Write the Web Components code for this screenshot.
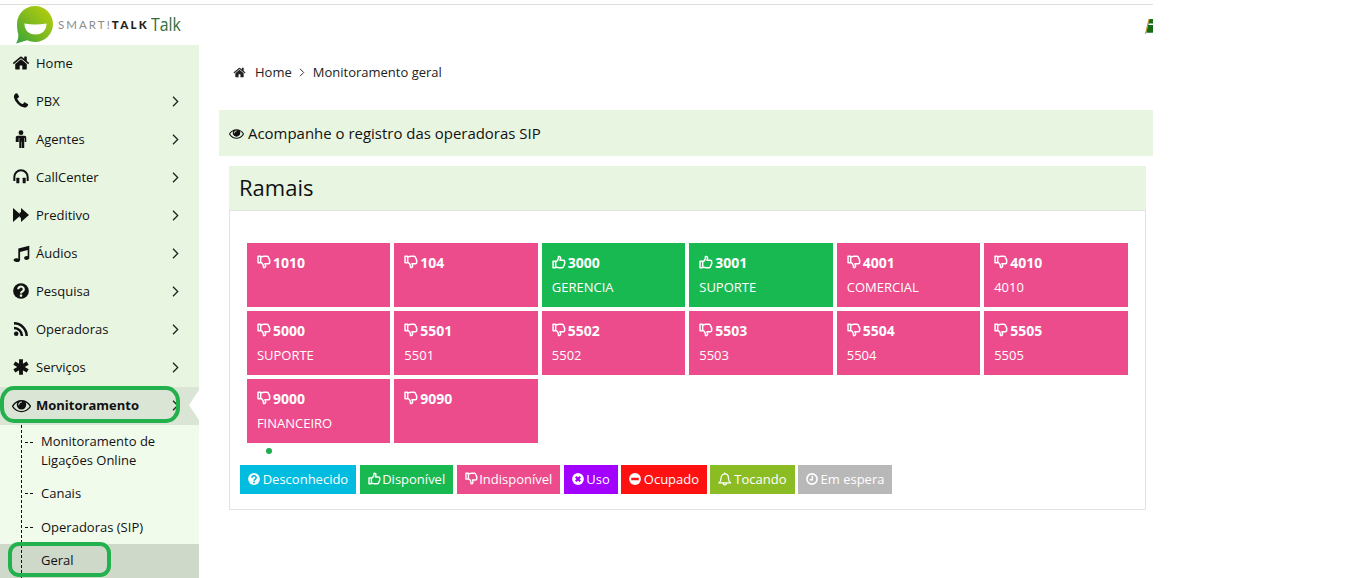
<!DOCTYPE html>
<html lang="pt">
<head>
<meta charset="utf-8">
<title>Monitoramento geral</title>
<style>
html,body{margin:0;padding:0;background:#fff;overflow:hidden;height:578px}
body{font:13px "Open Sans",sans-serif;color:#111}
</style>
</head>
<body>
<smart-app>
  <smart-header slot="header"></smart-header>
  <side-nav slot="nav">
    <nav-item icon="home">Home</nav-item>
    <nav-item icon="phone" more>PBX</nav-item>
    <nav-item icon="male" more>Agentes</nav-item>
    <nav-item icon="headphones" more>CallCenter</nav-item>
    <nav-item icon="forward" more>Preditivo</nav-item>
    <nav-item icon="music" more>Áudios</nav-item>
    <nav-item icon="question" more>Pesquisa</nav-item>
    <nav-item icon="rss" more>Operadoras</nav-item>
    <nav-item icon="asterisk" more>Serviços</nav-item>
    <nav-item icon="eye" more active>Monitoramento</nav-item>
    <sub-list>
      <sub-item tall>Monitoramento de<br>Ligações Online</sub-item>
      <sub-item>Canais</sub-item>
      <sub-item>Operadoras (SIP)</sub-item>
      <sub-item active>Geral</sub-item>
    </sub-list>
  </side-nav>
  <bread-crumb slot="main"></bread-crumb>
  <page-banner slot="main">Acompanhe o registro das operadoras SIP</page-banner>
  <ramal-panel slot="main" heading="Ramais">
    <ramal-tile slot="tiles" state="off" num="1010"></ramal-tile>
    <ramal-tile slot="tiles" state="off" num="104"></ramal-tile>
    <ramal-tile slot="tiles" state="on" num="3000">GERENCIA</ramal-tile>
    <ramal-tile slot="tiles" state="on" num="3001">SUPORTE</ramal-tile>
    <ramal-tile slot="tiles" state="off" num="4001">COMERCIAL</ramal-tile>
    <ramal-tile slot="tiles" state="off" num="4010">4010</ramal-tile>
    <ramal-tile slot="tiles" state="off" num="5000">SUPORTE</ramal-tile>
    <ramal-tile slot="tiles" state="off" num="5501">5501</ramal-tile>
    <ramal-tile slot="tiles" state="off" num="5502">5502</ramal-tile>
    <ramal-tile slot="tiles" state="off" num="5503">5503</ramal-tile>
    <ramal-tile slot="tiles" state="off" num="5504">5504</ramal-tile>
    <ramal-tile slot="tiles" state="off" num="5505">5505</ramal-tile>
    <ramal-tile slot="tiles" state="off" num="9000">FINANCEIRO</ramal-tile>
    <ramal-tile slot="tiles" state="off" num="9090"></ramal-tile>
    <status-badge slot="legend" icon="question" color="#00bcdf">Desconhecido</status-badge>
    <status-badge slot="legend" icon="thumbup" color="#19b952">Disponível</status-badge>
    <status-badge slot="legend" icon="thumbdown" color="#ec4c8b">Indisponível</status-badge>
    <status-badge slot="legend" icon="times" color="#a200ff">Uso</status-badge>
    <status-badge slot="legend" icon="minus" color="#ff1111">Ocupado</status-badge>
    <status-badge slot="legend" icon="bell" color="#8cbc24">Tocando</status-badge>
    <status-badge slot="legend" icon="clock" color="#b8b8b8">Em espera</status-badge>
  </ramal-panel>
</smart-app>
<script>
const THUMB = 'M1.200 7.200h3v7.300h-3zM4.200 7.800c1.300-.6 2.200-1.700 2.800-3.100.3-.8.4-1.700.4-3 1.500-.4 2.500.5 2.400 2.100-.1.900-.4 1.600-.7 2.300h3.700c1.500 0 2 1.200 1.500 2.200.6.800.5 1.800-.3 2.300.2.900-.1 1.700-.9 2.100.1 1.100-.6 1.800-1.700 1.800H8.100c-1.500 0-2.700-.5-3.900-.9';
const PATHS = {
  home:'<svg viewBox="0 0 1792 1792"><path fill="currentColor" d="M1472 992v480q0 26-19 45t-45 19h-384v-384h-256v384h-384q-26 0-45-19t-19-45v-480q0-1 .5-3t.5-3l575-474 575 474q1 2 1 6zm223-69l-62 74q-8 9-21 11h-3q-13 0-21-7l-692-577-692 577q-12 8-24 7-13-2-21-11l-62-74q-8-10-7-23.500t11-21.500l719-599q32-26 76-26t76 26l244 204v-195q0-14 9-23t23-9h192q14 0 23 9t9 23v408l219 182q10 8 11 21.500t-7 23.500z"/></svg>',
  phone:'<svg viewBox="0 0 1792 1792"><path fill="currentColor" d="M1600 1240q0 27-10 70.500t-21 68.500q-21 50-122 106-94 51-186 51-27 0-53-3.500t-57.500-12.500-47-14.500-55.500-20.500-49-18q-98-35-175-83-127-79-264-216t-216-264q-48-77-83-175-3-9-18-49t-20.500-55.500-14.500-47-12.500-57.500-3.500-53q0-92 51-186 56-101 106-122 25-11 68.500-21t70.500-10q14 0 21 3 18 6 53 76 11 19 30 54t35 63.500 31 53.500q3 4 17.500 25t21.500 35.500 7 28.500q0 20-28.500 50t-62 55-62 53-28.500 46q0 9 5 22.500t8.500 20.500 14 24 11.500 19q76 137 174 235t235 174q2 1 19 11.500t24 14 20.500 8.500 22.500 5q18 0 46-28.500t53-62 55-62 50-28.500q14 0 28.500 7t35.500 21.500 25 17.500q25 15 53.500 31t63.500 35 54 30q70 35 76 53 3 7 3 21z"/></svg>',
  male:'<svg viewBox="0 0 24 24"><circle cx="12" cy="3.600" r="3.200" fill="currentColor"/><path fill="currentColor" d="M7.500 7.800h9c1.500 0 2.500 1 2.500 2.400V16h-2v-5.500h-.7V24h-3v-8.500h-.6V24h-3V10.500H9V16H5v-5.800c0-1.400 1-2.400 2.500-2.400z"/></svg>',
  headphones:'<svg viewBox="0 0 24 24"><path fill="none" stroke="currentColor" stroke-width="3" d="M2 18v-6a10 10 0 0 1 20 0v6"/><rect x="5" y="13" width="4.500" height="8.500" rx="1" fill="currentColor"/><rect x="14.500" y="13" width="4.500" height="8.500" rx="1" fill="currentColor"/></svg>',
  forward:'<svg viewBox="0 0 24 24"><path fill="currentColor" d="M0 1.500L12 12 0 22.500zM12 1.500L24 12 12 22.500z"/><rect x="10" y="8" width="4" height="8" fill="currentColor"/></svg>',
  music:'<svg viewBox="0 0 24 24"><path fill="currentColor" d="M7.500 5L23 1v17c0 1.900-1.900 3.100-3.800 3.100s-3.500-1.100-3.500-2.700 1.700-2.800 3.700-2.800c.6 0 1 .1 1.300.2V7.200L10 10v11c0 1.800-1.900 3-3.800 3S.8 22.900.8 21.400s1.700-2.800 3.700-2.800c1.100 0 2.100.2 3 .7z"/></svg>',
  question:'<svg viewBox="0 0 24 24"><circle cx="12" cy="12" r="11.800" fill="currentColor"/><path fill="none" stroke="var(--hole,#e8f5e1)" stroke-width="3.200" d="M7.800 9.500a4.200 4 0 1 1 6.500 3.200c-1.500.9-2.300 1.400-2.300 3"/><rect x="10.200" y="17.200" width="3.600" height="3.400" fill="var(--hole,#e8f5e1)"/></svg>',
  rss:'<svg viewBox="0 0 24 24"><circle cx="4.800" cy="19.200" r="3.400" fill="currentColor"/><path fill="none" stroke="currentColor" stroke-width="3.800" d="M1.500 10.500a12 12 0 0 1 12 12M1.500 3.500a19 19 0 0 1 19 19"/></svg>',
  asterisk:'<svg viewBox="0 0 24 24"><path fill="none" stroke="currentColor" stroke-width="5.800" d="M12 .5v23M2 6.250l20 11.500M22 6.250l-20 11.500"/></svg>',
  eye:'<svg viewBox="0 0 1792 1792"><path fill="currentColor" d="M1664 960q-152-236-381-353 61 104 61 225 0 185-131.500 316.500t-316.500 131.500-316.500-131.500-131.500-316.500q0-121 61-225-229 117-381 353 133 205 333.500 326.500t434.500 121.500 434.500-121.500 333.500-326.500zm-720-384q0-20-14-34t-34-14q-125 0-214.500 89.500t-89.500 214.500q0 20 14 34t34 14 34-14 14-34q0-86 61-147t147-61q20 0 34-14t14-34zm848 384q0 34-20 69-140 230-376.500 368.500t-499.500 138.500-499.500-139-376.500-368q-20-35-20-69t20-69q140-229 376.500-368t499.500-139 499.500 139 376.500 368q20 35 20 69z"/></svg>',
  thumbup:'<svg viewBox="0 0 16 16"><path fill="none" stroke="currentColor" stroke-width="1.700" stroke-linejoin="round" d="'+THUMB+'"/></svg>',
  thumbdown:'<svg viewBox="0 0 16 16"><path fill="none" stroke="currentColor" stroke-width="1.700" stroke-linejoin="round" transform="matrix(1 0 0 -1 0 16)" d="'+THUMB+'"/></svg>',
  times:'<svg viewBox="0 0 24 24"><circle cx="12" cy="12" r="11.800" fill="currentColor"/><path stroke="var(--hole)" stroke-width="4.400" d="M7.500 7.500l9 9M16.500 7.500l-9 9"/></svg>',
  minus:'<svg viewBox="0 0 24 24"><circle cx="12" cy="12" r="11.800" fill="currentColor"/><rect x="4.500" y="9.500" width="15" height="5" fill="var(--hole)"/></svg>',
  bell:'<svg viewBox="0 0 24 24"><path fill="none" stroke="currentColor" stroke-width="2.200" stroke-linejoin="round" d="M1.500 19.500c2.500-2 4-4.500 4-9C5.500 6.400 8.300 3.500 12 3.500s6.500 2.900 6.500 7c0 4.500 1.500 7 4 9zM9 20a3 3 0 0 0 6 0M12 .8v2.700"/></svg>',
  clock:'<svg viewBox="0 0 24 24"><circle cx="12" cy="12" r="10.200" fill="none" stroke="currentColor" stroke-width="3.200"/><path fill="none" stroke="currentColor" stroke-width="2.600" d="M12.800 5.500v8H7.500"/></svg>'
};
const NAV_SIZE = {home:18,phone:18,male:18,headphones:16,forward:16,music:17,question:16,rss:16,asterisk:16,eye:19};
const BADGE_ICON = {thumbup:[13,1.7],thumbdown:[13,1.7],bell:[13.5,2.5]};

function define(name, css, html){
  customElements.define(name, class extends HTMLElement{
    constructor(){ super(); this.attachShadow({mode:'open'}); }
    connectedCallback(){
      this.shadowRoot.innerHTML = '<style>'+css+'</style>' + (typeof html==='function'?html(this):html);
    }
  });
}

define('x-icon', ':host{display:inline-flex;flex:none;width:var(--s,16px);height:var(--s,16px)} svg{display:block;width:100%;height:100%;overflow:visible}',
  el => PATHS[el.getAttribute('name')] || '');

define('smart-app', `
  :host{display:grid;grid-template-columns:199px 954px;grid-template-rows:45px 533px;width:1153px;height:578px;overflow:hidden}
  .m{display:flex;flex-direction:column;padding-left:20px;min-width:0}
  .h{grid-column:1/3}
`, `<div class="h"><slot name="header"></slot></div><div><slot name="nav"></slot></div><div class="m"><slot name="main"></slot></div>`);

define('smart-header', `
  :host{display:flex;align-items:flex-start;box-sizing:border-box;border-top:1px solid #ddd;margin-top:4px;height:41px;overflow:hidden}
  .logo{display:flex;align-items:flex-start;margin-left:15px}
  .logo svg{display:block;width:40px;height:41px;flex:none}
  .word{font:400 11.500px/12px "Lato","Liberation Sans",sans-serif;letter-spacing:2.050px;color:#8b8b8b;margin:14px 0 0 3px;white-space:nowrap}
  .word b{font-weight:900;color:#222;letter-spacing:2.200px}
  .talk{display:inline-block;font:400 19px/24px "Open Sans",sans-serif;color:#2f6e3a;margin:7px 0 0 2px;transform:scaleX(.83);transform-origin:0 50%}
  .book{margin-left:auto;display:block;width:8px;height:16px;margin-top:14px;flex:none}
`, `<div class="logo">
  <svg viewBox="0 0 40 41" aria-hidden="true"><defs><linearGradient id="g" x1="1" y1="0" x2="0" y2="1"><stop offset="0" stop-color="#bdd30a"/><stop offset=".55" stop-color="#7db81f"/><stop offset="1" stop-color="#33a33e"/></linearGradient></defs>
  <path fill="url(#g)" d="M20 1c10 0 18 8 18 18s-8 18-18 18c-2.800 0-5.400-.6-7.800-1.700L1 38.500c1.800-3 2.500-5.800 2.300-9C2.500 26.900 2 23 2 19 2 9 10 1 20 1z"/>
  <path fill="#fff" d="M9.500 18.500c7 1.300 14.500 1.300 22 0 .3 6.500-4.300 11-11 11s-11.300-4.500-11-11z"/></svg>
  <span class="word">SMART!<b>TALK</b></span><span class="talk">Talk</span></div>
  <svg class="book" viewBox="0 0 8 16" aria-hidden="true"><path fill="#c98a10" d="M3.500 0h1L1 15H0z"/><path fill="#146c14" d="M4.500 0H8v15H1z"/><path fill="#fff" d="M3.800 4.500H8V6H3.400zM1 13.800h7V15H1z"/></svg>`);

define('side-nav', `:host{display:block;width:199px;height:533px;background:#e8f5e1;overflow:hidden}`, `<slot></slot>`);

define('nav-item', `
  :host{display:flex;align-items:center;height:38px;box-sizing:border-box;padding:0 20px 2px 13px;position:relative;font-size:13px;color:#111;--hole:#e8f5e1}
  :host([active]){background:#dbe5d6;font-weight:700;--hole:#dbe5d6}
  .i{width:16px;height:16px;display:flex;align-items:center;justify-content:center;margin-right:7px;flex:none}
  .c{margin-left:auto;display:block;width:7px;height:11px;flex:none}
  .notch{position:absolute;right:0;top:3px;width:10px;height:30px;background:#fff;clip-path:polygon(100% 0,0 50%,100% 100%)}
  .ring{position:absolute;left:0;top:-1px;width:180px;height:37px;box-sizing:border-box;border:4px solid #22b14c;border-radius:14px/15px;pointer-events:none}
`, el => `<span class="i"><x-icon name="${el.getAttribute('icon')}" style="--s:${NAV_SIZE[el.getAttribute('icon')]}px"></x-icon></span><span><slot></slot></span>`
  + (el.hasAttribute('more') ? `<svg class="c" viewBox="0 0 7 11"><path fill="none" stroke="#222" stroke-width="1.300" d="M1 .8l4.700 4.700L1 10.200"/></svg>` : '')
  + (el.hasAttribute('active') ? `<span class="notch"></span><span class="ring"></span>` : ''));

define('sub-list', `
  :host{display:block;position:relative;background:#f1fbec}
  :host::before{content:"";position:absolute;left:21px;top:0;bottom:0;width:1px;background:repeating-linear-gradient(#111 0 3px,transparent 3px 5px);z-index:1}
`, `<slot></slot>`);

define('sub-item', `
  :host{display:block;position:relative;padding:7.500px 0 7.500px 41px;font-size:13px;line-height:19px;color:#111}
  :host([tall]){padding:6.500px 0 6.500px 41px}
  :host::before{content:"";position:absolute;left:25px;top:17px;width:8px;height:1px;background:linear-gradient(90deg,#111 0 3px,transparent 3px 5px,#111 5px 8px)}
  :host([active]){background:#cfd9ca;padding:6.500px 0 8.500px 41px}
  :host([active])::before{display:none}
  .ring{position:absolute;left:8px;top:-2px;width:103px;height:35px;box-sizing:border-box;border:4px solid #22b14c;border-radius:11px;z-index:2}
`, el => `<slot></slot>` + (el.hasAttribute('active') ? `<span class="ring"></span>` : ''));

define('bread-crumb', `
  :host{display:flex;align-items:center;height:20px;margin:17px 0 28px;padding-left:14px;font-size:13px;color:#222}
  x-icon{--s:13px;margin-right:9px}
  svg{width:6px;height:9px;margin:0 7.500px;display:block}
`, `<x-icon name="home"></x-icon><span>Home</span><svg viewBox="0 0 6 9"><path fill="none" stroke="#333" d="M1 .8l3.700 3.700L1 8.200"/></svg><span>Monitoramento geral</span>`);

define('page-banner', `
  :host{display:flex;align-items:center;height:46px;background:#e8f5e1;padding-left:10px;font-size:14.960px;color:#111;margin-bottom:10px;--s:15px}
  x-icon{margin-right:4px}
`, `<x-icon name="eye"></x-icon><span><slot></slot></span>`);

define('ramal-panel', `
  :host{display:block;margin:0 7px 0 10px}
  h2{margin:0;height:45px;box-sizing:border-box;background:#e8f5e1;font:400 22px/42px "Open Sans",sans-serif;color:#111;padding-left:10px;border-bottom:1px solid #e3e3e3}
  .body{border:1px solid #e3e3e3;border-top:0;padding:32px 0 15px}
  .tiles{display:grid;grid-template-columns:repeat(6,1fr);gap:4px;margin:0 17.400px 0 16.900px}
  .dot{width:6px;height:6px;border-radius:50%;background:#20ad4f;margin:5px 0 11px 36px}
  .legend{display:flex;gap:3.300px;margin-left:10px}
`, el => `<h2>${el.getAttribute('heading')}</h2><div class="body"><div class="tiles"><slot name="tiles"></slot></div><div class="dot"></div><div class="legend"><slot name="legend"></slot></div></div>`);

define('ramal-tile', `
  :host{display:block;height:64px;box-sizing:border-box;padding:9px 10px 0;color:#fff}
  :host([state=off]){background:#ec4c8b}
  :host([state=on]){background:#19b952}
  .n{display:flex;align-items:center;height:20px;font-weight:700;font-size:14px;--s:14px}
  x-icon{margin-right:2px}
  .s{font-size:13px;line-height:20px;margin-top:5px}
`, el => `<div class="n"><x-icon name="${el.getAttribute('state')==='on'?'thumbup':'thumbdown'}"></x-icon><span>${el.getAttribute('num')}</span></div><div class="s"><slot></slot></div>`);

define('status-badge', `
  :host{display:flex;align-items:center;height:29px;box-sizing:border-box;padding:0 8px 2px;color:#fff;font-size:13px;white-space:nowrap}
`, el => {
  el.style.background = el.getAttribute('color');
  el.style.setProperty('--hole', el.getAttribute('color'));
  const [size, gap] = BADGE_ICON[el.getAttribute('icon')] || [12, 2.7];
  return `<x-icon name="${el.getAttribute('icon')}" style="--s:${size}px;margin-right:${gap}px"></x-icon><span><slot></slot></span>`;
});
</script>
</body>
</html>
